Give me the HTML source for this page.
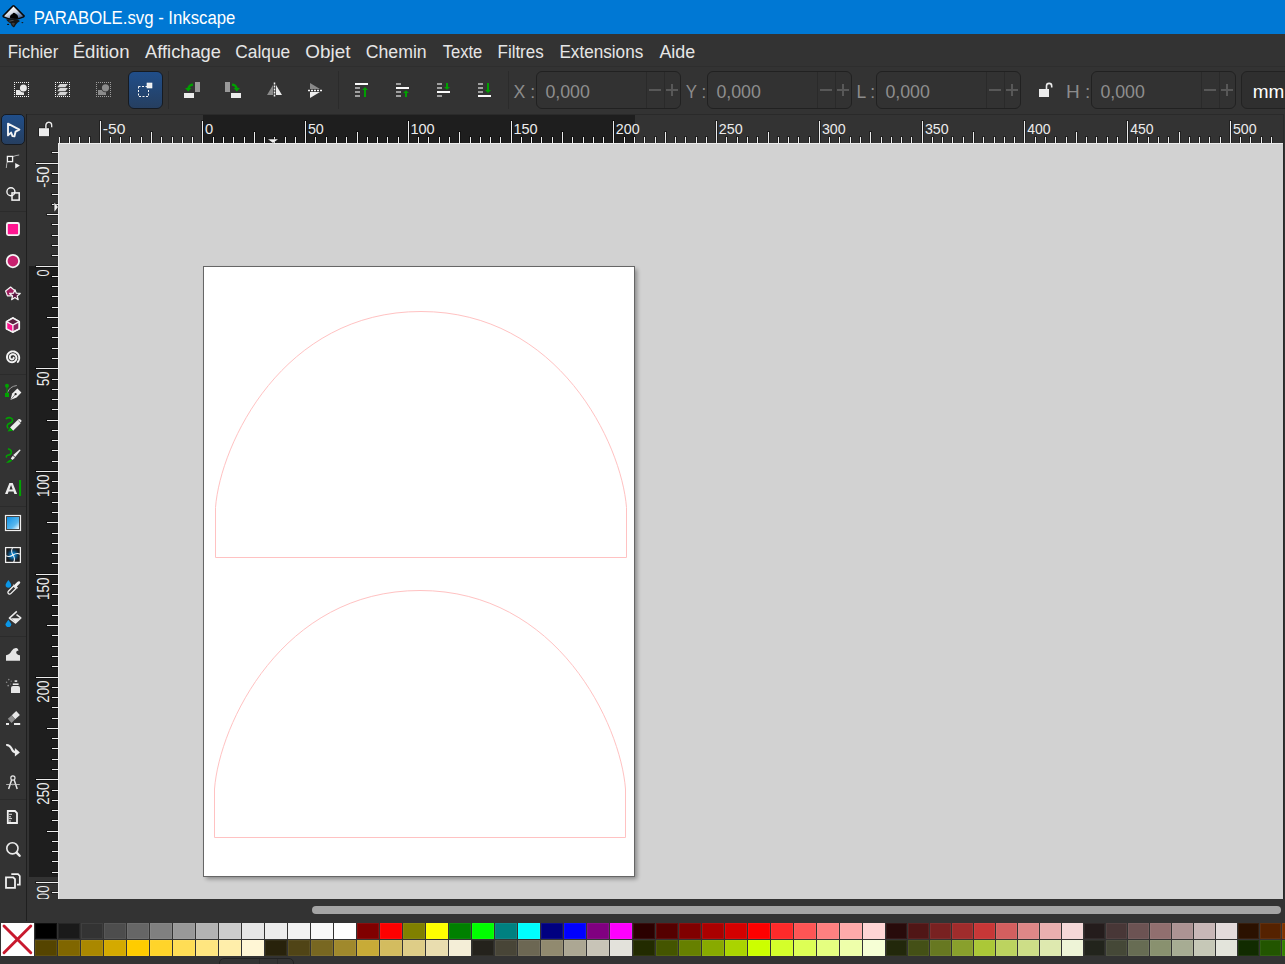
<!DOCTYPE html><html><head><meta charset="utf-8"><style>
*{margin:0;padding:0;box-sizing:border-box}
html,body{width:1285px;height:964px;overflow:hidden;background:#333333;font-family:"Liberation Sans", sans-serif}
.a{position:absolute}
.t{position:absolute;white-space:pre;line-height:1}
text{font-variant-ligatures:none;font-feature-settings:"liga" 0,"clig" 0}
</style></head><body>

<div class="a" style="left:0;top:0;width:1285px;height:34px;background:#0078d4"></div>
<div class="a" style="left:0;top:34px;width:1285px;height:32px;background:#333"></div>
<div class="a" style="left:0;top:66px;width:1285px;height:1px;background:#2e2e2e"></div>
<div class="a" style="left:128px;top:71px;width:35px;height:38px;border-radius:6px;background:linear-gradient(#204e8a,#263f60);border:1px solid #161b22"></div>
<div class="a" style="left:168px;top:71px;width:1px;height:38px;background:#2b2b2b"></div>
<div class="a" style="left:338px;top:71px;width:1px;height:38px;background:#2b2b2b"></div>
<div class="a" style="left:508px;top:71px;width:1px;height:38px;background:#2b2b2b"></div>
<div class="a" style="left:536.0px;top:71px;width:145.0px;height:38px;border-radius:6px;background:#323232;border:1px solid #212121"></div>
<div class="a" style="left:646.0px;top:72px;width:1px;height:36px;background:#2a2a2a"></div>
<div class="a" style="left:663.6px;top:72px;width:1px;height:36px;background:#2a2a2a"></div>
<div class="a" style="left:648.5px;top:88.7px;width:12px;height:2px;background:#585858"></div>
<div class="a" style="left:665.6px;top:88.7px;width:12px;height:2px;background:#585858"></div>
<div class="a" style="left:670.6px;top:83.7px;width:2px;height:12px;background:#585858"></div>
<div class="a" style="left:707.0px;top:71px;width:145.0px;height:38px;border-radius:6px;background:#323232;border:1px solid #212121"></div>
<div class="a" style="left:817.0px;top:72px;width:1px;height:36px;background:#2a2a2a"></div>
<div class="a" style="left:834.6px;top:72px;width:1px;height:36px;background:#2a2a2a"></div>
<div class="a" style="left:819.5px;top:88.7px;width:12px;height:2px;background:#585858"></div>
<div class="a" style="left:836.6px;top:88.7px;width:12px;height:2px;background:#585858"></div>
<div class="a" style="left:841.6px;top:83.7px;width:2px;height:12px;background:#585858"></div>
<div class="a" style="left:876.0px;top:71px;width:145.0px;height:38px;border-radius:6px;background:#323232;border:1px solid #212121"></div>
<div class="a" style="left:986.0px;top:72px;width:1px;height:36px;background:#2a2a2a"></div>
<div class="a" style="left:1003.6px;top:72px;width:1px;height:36px;background:#2a2a2a"></div>
<div class="a" style="left:988.5px;top:88.7px;width:12px;height:2px;background:#585858"></div>
<div class="a" style="left:1005.6px;top:88.7px;width:12px;height:2px;background:#585858"></div>
<div class="a" style="left:1010.6px;top:83.7px;width:2px;height:12px;background:#585858"></div>
<div class="a" style="left:1091.0px;top:71px;width:145.0px;height:38px;border-radius:6px;background:#323232;border:1px solid #212121"></div>
<div class="a" style="left:1201.0px;top:72px;width:1px;height:36px;background:#2a2a2a"></div>
<div class="a" style="left:1218.6px;top:72px;width:1px;height:36px;background:#2a2a2a"></div>
<div class="a" style="left:1203.5px;top:88.7px;width:12px;height:2px;background:#585858"></div>
<div class="a" style="left:1220.6px;top:88.7px;width:12px;height:2px;background:#585858"></div>
<div class="a" style="left:1225.6px;top:83.7px;width:2px;height:12px;background:#585858"></div>
<div class="a" style="left:1241px;top:71px;width:60px;height:38px;border-radius:6px;background:#2f2f2f;border:1px solid #222"></div>
<div class="a" style="left:1px;top:114px;width:24px;height:31px;border-radius:5px;background:linear-gradient(#204e8a,#263f60);border:1px solid #161b22"></div>
<div class="a" style="left:26px;top:114px;width:1px;height:807px;background:#1f1f1f"></div>
<div class="a" style="left:27px;top:114px;width:1258px;height:30px;background:#333"></div>
<div class="a" style="left:203px;top:114px;width:432px;height:29px;background:#1e1e1e"></div>
<div class="a" style="left:29px;top:144px;width:30px;height:755px;background:#333"></div>
<div class="a" style="left:29px;top:266px;width:29px;height:611px;background:#1e1e1e"></div>
<div class="a" style="left:59px;top:144px;width:1224px;height:755px;background:#d2d2d2"></div>
<svg class="a" style="left:0;top:0" width="1285" height="964" font-family="Liberation Sans">
<defs><clipPath id="lr"><rect x="0" y="144" width="59" height="755"/></clipPath><clipPath id="tr"><rect x="59" y="114" width="1224" height="30"/></clipPath></defs>
<rect x="27" y="114" width="1256" height="1" fill="#2a2a2a"/>
<rect x="1283" y="114" width="1" height="785" fill="#2a2a2a"/>
<rect x="59" y="143" width="1224" height="1" fill="#ececec"/>
<rect x="58" y="143" width="1" height="756" fill="#ececec"/>
<g clip-path="url(#tr)">
<rect x="37" y="136" width="3" height="7" fill="#000" opacity="0.35"/>
<rect x="38" y="137" width="1" height="6" fill="#ececec"/>
<rect x="47" y="131" width="3" height="12" fill="#000" opacity="0.35"/>
<rect x="48" y="132" width="1" height="11" fill="#ececec"/>
<rect x="58" y="136" width="3" height="7" fill="#000" opacity="0.35"/>
<rect x="59" y="137" width="1" height="6" fill="#ececec"/>
<rect x="68" y="136" width="3" height="7" fill="#000" opacity="0.35"/>
<rect x="69" y="137" width="1" height="6" fill="#ececec"/>
<rect x="78" y="136" width="3" height="7" fill="#000" opacity="0.35"/>
<rect x="79" y="137" width="1" height="6" fill="#ececec"/>
<rect x="88" y="136" width="3" height="7" fill="#000" opacity="0.35"/>
<rect x="89" y="137" width="1" height="6" fill="#ececec"/>
<rect x="99" y="120" width="3" height="23" fill="#000" opacity="0.35"/>
<rect x="100" y="121" width="1" height="22" fill="#ececec"/>
<text x="102.80" y="134.00" font-size="15.20" fill="#ececec" textLength="22.55" lengthAdjust="spacingAndGlyphs">-50</text>
<rect x="109" y="136" width="3" height="7" fill="#000" opacity="0.35"/>
<rect x="110" y="137" width="1" height="6" fill="#ececec"/>
<rect x="119" y="136" width="3" height="7" fill="#000" opacity="0.35"/>
<rect x="120" y="137" width="1" height="6" fill="#ececec"/>
<rect x="129" y="136" width="3" height="7" fill="#000" opacity="0.35"/>
<rect x="130" y="137" width="1" height="6" fill="#ececec"/>
<rect x="140" y="136" width="3" height="7" fill="#000" opacity="0.35"/>
<rect x="141" y="137" width="1" height="6" fill="#ececec"/>
<rect x="150" y="131" width="3" height="12" fill="#000" opacity="0.35"/>
<rect x="151" y="132" width="1" height="11" fill="#ececec"/>
<rect x="160" y="136" width="3" height="7" fill="#000" opacity="0.35"/>
<rect x="161" y="137" width="1" height="6" fill="#ececec"/>
<rect x="171" y="136" width="3" height="7" fill="#000" opacity="0.35"/>
<rect x="172" y="137" width="1" height="6" fill="#ececec"/>
<rect x="181" y="136" width="3" height="7" fill="#000" opacity="0.35"/>
<rect x="182" y="137" width="1" height="6" fill="#ececec"/>
<rect x="191" y="136" width="3" height="7" fill="#000" opacity="0.35"/>
<rect x="192" y="137" width="1" height="6" fill="#ececec"/>
<rect x="201" y="120" width="3" height="23" fill="#000" opacity="0.35"/>
<rect x="202" y="121" width="1" height="22" fill="#ececec"/>
<text x="204.91" y="134.00" font-size="15.20" fill="#ececec" textLength="8.17" lengthAdjust="spacingAndGlyphs">0</text>
<rect x="212" y="136" width="3" height="7" fill="#000" opacity="0.35"/>
<rect x="213" y="137" width="1" height="6" fill="#ececec"/>
<rect x="222" y="136" width="3" height="7" fill="#000" opacity="0.35"/>
<rect x="223" y="137" width="1" height="6" fill="#ececec"/>
<rect x="232" y="136" width="3" height="7" fill="#000" opacity="0.35"/>
<rect x="233" y="137" width="1" height="6" fill="#ececec"/>
<rect x="243" y="136" width="3" height="7" fill="#000" opacity="0.35"/>
<rect x="244" y="137" width="1" height="6" fill="#ececec"/>
<rect x="253" y="131" width="3" height="12" fill="#000" opacity="0.35"/>
<rect x="254" y="132" width="1" height="11" fill="#ececec"/>
<rect x="263" y="136" width="3" height="7" fill="#000" opacity="0.35"/>
<rect x="264" y="137" width="1" height="6" fill="#ececec"/>
<rect x="273" y="136" width="3" height="7" fill="#000" opacity="0.35"/>
<rect x="274" y="137" width="1" height="6" fill="#ececec"/>
<rect x="284" y="136" width="3" height="7" fill="#000" opacity="0.35"/>
<rect x="285" y="137" width="1" height="6" fill="#ececec"/>
<rect x="294" y="136" width="3" height="7" fill="#000" opacity="0.35"/>
<rect x="295" y="137" width="1" height="6" fill="#ececec"/>
<rect x="304" y="120" width="3" height="23" fill="#000" opacity="0.35"/>
<rect x="305" y="121" width="1" height="22" fill="#ececec"/>
<text x="307.93" y="134.00" font-size="15.20" fill="#ececec" textLength="15.91" lengthAdjust="spacingAndGlyphs">50</text>
<rect x="314" y="136" width="3" height="7" fill="#000" opacity="0.35"/>
<rect x="315" y="137" width="1" height="6" fill="#ececec"/>
<rect x="325" y="136" width="3" height="7" fill="#000" opacity="0.35"/>
<rect x="326" y="137" width="1" height="6" fill="#ececec"/>
<rect x="335" y="136" width="3" height="7" fill="#000" opacity="0.35"/>
<rect x="336" y="137" width="1" height="6" fill="#ececec"/>
<rect x="345" y="136" width="3" height="7" fill="#000" opacity="0.35"/>
<rect x="346" y="137" width="1" height="6" fill="#ececec"/>
<rect x="356" y="131" width="3" height="12" fill="#000" opacity="0.35"/>
<rect x="357" y="132" width="1" height="11" fill="#ececec"/>
<rect x="366" y="136" width="3" height="7" fill="#000" opacity="0.35"/>
<rect x="367" y="137" width="1" height="6" fill="#ececec"/>
<rect x="376" y="136" width="3" height="7" fill="#000" opacity="0.35"/>
<rect x="377" y="137" width="1" height="6" fill="#ececec"/>
<rect x="386" y="136" width="3" height="7" fill="#000" opacity="0.35"/>
<rect x="387" y="137" width="1" height="6" fill="#ececec"/>
<rect x="397" y="136" width="3" height="7" fill="#000" opacity="0.35"/>
<rect x="398" y="137" width="1" height="6" fill="#ececec"/>
<rect x="407" y="120" width="3" height="23" fill="#000" opacity="0.35"/>
<rect x="408" y="121" width="1" height="22" fill="#ececec"/>
<text x="410.41" y="134.00" font-size="15.20" fill="#ececec" textLength="24.20" lengthAdjust="spacingAndGlyphs">100</text>
<rect x="417" y="136" width="3" height="7" fill="#000" opacity="0.35"/>
<rect x="418" y="137" width="1" height="6" fill="#ececec"/>
<rect x="427" y="136" width="3" height="7" fill="#000" opacity="0.35"/>
<rect x="428" y="137" width="1" height="6" fill="#ececec"/>
<rect x="438" y="136" width="3" height="7" fill="#000" opacity="0.35"/>
<rect x="439" y="137" width="1" height="6" fill="#ececec"/>
<rect x="448" y="136" width="3" height="7" fill="#000" opacity="0.35"/>
<rect x="449" y="137" width="1" height="6" fill="#ececec"/>
<rect x="458" y="131" width="3" height="12" fill="#000" opacity="0.35"/>
<rect x="459" y="132" width="1" height="11" fill="#ececec"/>
<rect x="469" y="136" width="3" height="7" fill="#000" opacity="0.35"/>
<rect x="470" y="137" width="1" height="6" fill="#ececec"/>
<rect x="479" y="136" width="3" height="7" fill="#000" opacity="0.35"/>
<rect x="480" y="137" width="1" height="6" fill="#ececec"/>
<rect x="489" y="136" width="3" height="7" fill="#000" opacity="0.35"/>
<rect x="490" y="137" width="1" height="6" fill="#ececec"/>
<rect x="499" y="136" width="3" height="7" fill="#000" opacity="0.35"/>
<rect x="500" y="137" width="1" height="6" fill="#ececec"/>
<rect x="510" y="120" width="3" height="23" fill="#000" opacity="0.35"/>
<rect x="511" y="121" width="1" height="22" fill="#ececec"/>
<text x="513.41" y="134.00" font-size="15.20" fill="#ececec" textLength="24.20" lengthAdjust="spacingAndGlyphs">150</text>
<rect x="520" y="136" width="3" height="7" fill="#000" opacity="0.35"/>
<rect x="521" y="137" width="1" height="6" fill="#ececec"/>
<rect x="530" y="136" width="3" height="7" fill="#000" opacity="0.35"/>
<rect x="531" y="137" width="1" height="6" fill="#ececec"/>
<rect x="540" y="136" width="3" height="7" fill="#000" opacity="0.35"/>
<rect x="541" y="137" width="1" height="6" fill="#ececec"/>
<rect x="551" y="136" width="3" height="7" fill="#000" opacity="0.35"/>
<rect x="552" y="137" width="1" height="6" fill="#ececec"/>
<rect x="561" y="131" width="3" height="12" fill="#000" opacity="0.35"/>
<rect x="562" y="132" width="1" height="11" fill="#ececec"/>
<rect x="571" y="136" width="3" height="7" fill="#000" opacity="0.35"/>
<rect x="572" y="137" width="1" height="6" fill="#ececec"/>
<rect x="582" y="136" width="3" height="7" fill="#000" opacity="0.35"/>
<rect x="583" y="137" width="1" height="6" fill="#ececec"/>
<rect x="592" y="136" width="3" height="7" fill="#000" opacity="0.35"/>
<rect x="593" y="137" width="1" height="6" fill="#ececec"/>
<rect x="602" y="136" width="3" height="7" fill="#000" opacity="0.35"/>
<rect x="603" y="137" width="1" height="6" fill="#ececec"/>
<rect x="612" y="120" width="3" height="23" fill="#000" opacity="0.35"/>
<rect x="613" y="121" width="1" height="22" fill="#ececec"/>
<text x="615.79" y="134.00" font-size="15.20" fill="#ececec" textLength="23.81" lengthAdjust="spacingAndGlyphs">200</text>
<rect x="623" y="136" width="3" height="7" fill="#000" opacity="0.35"/>
<rect x="624" y="137" width="1" height="6" fill="#ececec"/>
<rect x="633" y="136" width="3" height="7" fill="#000" opacity="0.35"/>
<rect x="634" y="137" width="1" height="6" fill="#ececec"/>
<rect x="643" y="136" width="3" height="7" fill="#000" opacity="0.35"/>
<rect x="644" y="137" width="1" height="6" fill="#ececec"/>
<rect x="654" y="136" width="3" height="7" fill="#000" opacity="0.35"/>
<rect x="655" y="137" width="1" height="6" fill="#ececec"/>
<rect x="664" y="131" width="3" height="12" fill="#000" opacity="0.35"/>
<rect x="665" y="132" width="1" height="11" fill="#ececec"/>
<rect x="674" y="136" width="3" height="7" fill="#000" opacity="0.35"/>
<rect x="675" y="137" width="1" height="6" fill="#ececec"/>
<rect x="684" y="136" width="3" height="7" fill="#000" opacity="0.35"/>
<rect x="685" y="137" width="1" height="6" fill="#ececec"/>
<rect x="695" y="136" width="3" height="7" fill="#000" opacity="0.35"/>
<rect x="696" y="137" width="1" height="6" fill="#ececec"/>
<rect x="705" y="136" width="3" height="7" fill="#000" opacity="0.35"/>
<rect x="706" y="137" width="1" height="6" fill="#ececec"/>
<rect x="715" y="120" width="3" height="23" fill="#000" opacity="0.35"/>
<rect x="716" y="121" width="1" height="22" fill="#ececec"/>
<text x="718.79" y="134.00" font-size="15.20" fill="#ececec" textLength="23.81" lengthAdjust="spacingAndGlyphs">250</text>
<rect x="725" y="136" width="3" height="7" fill="#000" opacity="0.35"/>
<rect x="726" y="137" width="1" height="6" fill="#ececec"/>
<rect x="736" y="136" width="3" height="7" fill="#000" opacity="0.35"/>
<rect x="737" y="137" width="1" height="6" fill="#ececec"/>
<rect x="746" y="136" width="3" height="7" fill="#000" opacity="0.35"/>
<rect x="747" y="137" width="1" height="6" fill="#ececec"/>
<rect x="756" y="136" width="3" height="7" fill="#000" opacity="0.35"/>
<rect x="757" y="137" width="1" height="6" fill="#ececec"/>
<rect x="767" y="131" width="3" height="12" fill="#000" opacity="0.35"/>
<rect x="768" y="132" width="1" height="11" fill="#ececec"/>
<rect x="777" y="136" width="3" height="7" fill="#000" opacity="0.35"/>
<rect x="778" y="137" width="1" height="6" fill="#ececec"/>
<rect x="787" y="136" width="3" height="7" fill="#000" opacity="0.35"/>
<rect x="788" y="137" width="1" height="6" fill="#ececec"/>
<rect x="797" y="136" width="3" height="7" fill="#000" opacity="0.35"/>
<rect x="798" y="137" width="1" height="6" fill="#ececec"/>
<rect x="808" y="136" width="3" height="7" fill="#000" opacity="0.35"/>
<rect x="809" y="137" width="1" height="6" fill="#ececec"/>
<rect x="818" y="120" width="3" height="23" fill="#000" opacity="0.35"/>
<rect x="819" y="121" width="1" height="22" fill="#ececec"/>
<text x="821.93" y="134.00" font-size="15.20" fill="#ececec" textLength="23.66" lengthAdjust="spacingAndGlyphs">300</text>
<rect x="828" y="136" width="3" height="7" fill="#000" opacity="0.35"/>
<rect x="829" y="137" width="1" height="6" fill="#ececec"/>
<rect x="838" y="136" width="3" height="7" fill="#000" opacity="0.35"/>
<rect x="839" y="137" width="1" height="6" fill="#ececec"/>
<rect x="849" y="136" width="3" height="7" fill="#000" opacity="0.35"/>
<rect x="850" y="137" width="1" height="6" fill="#ececec"/>
<rect x="859" y="136" width="3" height="7" fill="#000" opacity="0.35"/>
<rect x="860" y="137" width="1" height="6" fill="#ececec"/>
<rect x="869" y="131" width="3" height="12" fill="#000" opacity="0.35"/>
<rect x="870" y="132" width="1" height="11" fill="#ececec"/>
<rect x="880" y="136" width="3" height="7" fill="#000" opacity="0.35"/>
<rect x="881" y="137" width="1" height="6" fill="#ececec"/>
<rect x="890" y="136" width="3" height="7" fill="#000" opacity="0.35"/>
<rect x="891" y="137" width="1" height="6" fill="#ececec"/>
<rect x="900" y="136" width="3" height="7" fill="#000" opacity="0.35"/>
<rect x="901" y="137" width="1" height="6" fill="#ececec"/>
<rect x="910" y="136" width="3" height="7" fill="#000" opacity="0.35"/>
<rect x="911" y="137" width="1" height="6" fill="#ececec"/>
<rect x="921" y="120" width="3" height="23" fill="#000" opacity="0.35"/>
<rect x="922" y="121" width="1" height="22" fill="#ececec"/>
<text x="924.93" y="134.00" font-size="15.20" fill="#ececec" textLength="23.66" lengthAdjust="spacingAndGlyphs">350</text>
<rect x="931" y="136" width="3" height="7" fill="#000" opacity="0.35"/>
<rect x="932" y="137" width="1" height="6" fill="#ececec"/>
<rect x="941" y="136" width="3" height="7" fill="#000" opacity="0.35"/>
<rect x="942" y="137" width="1" height="6" fill="#ececec"/>
<rect x="951" y="136" width="3" height="7" fill="#000" opacity="0.35"/>
<rect x="952" y="137" width="1" height="6" fill="#ececec"/>
<rect x="962" y="136" width="3" height="7" fill="#000" opacity="0.35"/>
<rect x="963" y="137" width="1" height="6" fill="#ececec"/>
<rect x="972" y="131" width="3" height="12" fill="#000" opacity="0.35"/>
<rect x="973" y="132" width="1" height="11" fill="#ececec"/>
<rect x="982" y="136" width="3" height="7" fill="#000" opacity="0.35"/>
<rect x="983" y="137" width="1" height="6" fill="#ececec"/>
<rect x="993" y="136" width="3" height="7" fill="#000" opacity="0.35"/>
<rect x="994" y="137" width="1" height="6" fill="#ececec"/>
<rect x="1003" y="136" width="3" height="7" fill="#000" opacity="0.35"/>
<rect x="1004" y="137" width="1" height="6" fill="#ececec"/>
<rect x="1013" y="136" width="3" height="7" fill="#000" opacity="0.35"/>
<rect x="1014" y="137" width="1" height="6" fill="#ececec"/>
<rect x="1023" y="120" width="3" height="23" fill="#000" opacity="0.35"/>
<rect x="1024" y="121" width="1" height="22" fill="#ececec"/>
<text x="1027.22" y="134.00" font-size="15.20" fill="#ececec" textLength="23.37" lengthAdjust="spacingAndGlyphs">400</text>
<rect x="1034" y="136" width="3" height="7" fill="#000" opacity="0.35"/>
<rect x="1035" y="137" width="1" height="6" fill="#ececec"/>
<rect x="1044" y="136" width="3" height="7" fill="#000" opacity="0.35"/>
<rect x="1045" y="137" width="1" height="6" fill="#ececec"/>
<rect x="1054" y="136" width="3" height="7" fill="#000" opacity="0.35"/>
<rect x="1055" y="137" width="1" height="6" fill="#ececec"/>
<rect x="1065" y="136" width="3" height="7" fill="#000" opacity="0.35"/>
<rect x="1066" y="137" width="1" height="6" fill="#ececec"/>
<rect x="1075" y="131" width="3" height="12" fill="#000" opacity="0.35"/>
<rect x="1076" y="132" width="1" height="11" fill="#ececec"/>
<rect x="1085" y="136" width="3" height="7" fill="#000" opacity="0.35"/>
<rect x="1086" y="137" width="1" height="6" fill="#ececec"/>
<rect x="1095" y="136" width="3" height="7" fill="#000" opacity="0.35"/>
<rect x="1096" y="137" width="1" height="6" fill="#ececec"/>
<rect x="1106" y="136" width="3" height="7" fill="#000" opacity="0.35"/>
<rect x="1107" y="137" width="1" height="6" fill="#ececec"/>
<rect x="1116" y="136" width="3" height="7" fill="#000" opacity="0.35"/>
<rect x="1117" y="137" width="1" height="6" fill="#ececec"/>
<rect x="1126" y="120" width="3" height="23" fill="#000" opacity="0.35"/>
<rect x="1127" y="121" width="1" height="22" fill="#ececec"/>
<text x="1130.22" y="134.00" font-size="15.20" fill="#ececec" textLength="23.37" lengthAdjust="spacingAndGlyphs">450</text>
<rect x="1136" y="136" width="3" height="7" fill="#000" opacity="0.35"/>
<rect x="1137" y="137" width="1" height="6" fill="#ececec"/>
<rect x="1147" y="136" width="3" height="7" fill="#000" opacity="0.35"/>
<rect x="1148" y="137" width="1" height="6" fill="#ececec"/>
<rect x="1157" y="136" width="3" height="7" fill="#000" opacity="0.35"/>
<rect x="1158" y="137" width="1" height="6" fill="#ececec"/>
<rect x="1167" y="136" width="3" height="7" fill="#000" opacity="0.35"/>
<rect x="1168" y="137" width="1" height="6" fill="#ececec"/>
<rect x="1178" y="131" width="3" height="12" fill="#000" opacity="0.35"/>
<rect x="1179" y="132" width="1" height="11" fill="#ececec"/>
<rect x="1188" y="136" width="3" height="7" fill="#000" opacity="0.35"/>
<rect x="1189" y="137" width="1" height="6" fill="#ececec"/>
<rect x="1198" y="136" width="3" height="7" fill="#000" opacity="0.35"/>
<rect x="1199" y="137" width="1" height="6" fill="#ececec"/>
<rect x="1208" y="136" width="3" height="7" fill="#000" opacity="0.35"/>
<rect x="1209" y="137" width="1" height="6" fill="#ececec"/>
<rect x="1219" y="136" width="3" height="7" fill="#000" opacity="0.35"/>
<rect x="1220" y="137" width="1" height="6" fill="#ececec"/>
<rect x="1229" y="120" width="3" height="23" fill="#000" opacity="0.35"/>
<rect x="1230" y="121" width="1" height="22" fill="#ececec"/>
<text x="1232.93" y="134.00" font-size="15.20" fill="#ececec" textLength="23.66" lengthAdjust="spacingAndGlyphs">500</text>
<rect x="1239" y="136" width="3" height="7" fill="#000" opacity="0.35"/>
<rect x="1240" y="137" width="1" height="6" fill="#ececec"/>
<rect x="1249" y="136" width="3" height="7" fill="#000" opacity="0.35"/>
<rect x="1250" y="137" width="1" height="6" fill="#ececec"/>
<rect x="1260" y="136" width="3" height="7" fill="#000" opacity="0.35"/>
<rect x="1261" y="137" width="1" height="6" fill="#ececec"/>
<rect x="1270" y="136" width="3" height="7" fill="#000" opacity="0.35"/>
<rect x="1271" y="137" width="1" height="6" fill="#ececec"/>
<path d="M267.4,138.8 L278.6,138.8 L273,143.6 Z" fill="#000" opacity="0.5"/>
<path d="M268,139.3 L278,139.3 L273,143 Z" fill="#f0f0f0"/>
</g><g clip-path="url(#lr)">
<rect x="51" y="141" width="7" height="3" fill="#000" opacity="0.35"/>
<rect x="52" y="142" width="6" height="1" fill="#ececec"/>
<rect x="51" y="151" width="7" height="3" fill="#000" opacity="0.35"/>
<rect x="52" y="152" width="6" height="1" fill="#ececec"/>
<rect x="35" y="162" width="23" height="3" fill="#000" opacity="0.35"/>
<rect x="36" y="163" width="22" height="1" fill="#ececec"/>
<text transform="translate(49.30,187.20) rotate(-90)" x="-0.67" y="0" font-size="15.70" fill="#ececec" textLength="21.39" lengthAdjust="spacingAndGlyphs">-50</text>
<rect x="51" y="172" width="7" height="3" fill="#000" opacity="0.35"/>
<rect x="52" y="173" width="6" height="1" fill="#ececec"/>
<rect x="51" y="182" width="7" height="3" fill="#000" opacity="0.35"/>
<rect x="52" y="183" width="6" height="1" fill="#ececec"/>
<rect x="51" y="193" width="7" height="3" fill="#000" opacity="0.35"/>
<rect x="52" y="194" width="6" height="1" fill="#ececec"/>
<rect x="51" y="203" width="7" height="3" fill="#000" opacity="0.35"/>
<rect x="52" y="204" width="6" height="1" fill="#ececec"/>
<rect x="46" y="213" width="12" height="3" fill="#000" opacity="0.35"/>
<rect x="47" y="214" width="11" height="1" fill="#ececec"/>
<rect x="51" y="223" width="7" height="3" fill="#000" opacity="0.35"/>
<rect x="52" y="224" width="6" height="1" fill="#ececec"/>
<rect x="51" y="234" width="7" height="3" fill="#000" opacity="0.35"/>
<rect x="52" y="235" width="6" height="1" fill="#ececec"/>
<rect x="51" y="244" width="7" height="3" fill="#000" opacity="0.35"/>
<rect x="52" y="245" width="6" height="1" fill="#ececec"/>
<rect x="51" y="254" width="7" height="3" fill="#000" opacity="0.35"/>
<rect x="52" y="255" width="6" height="1" fill="#ececec"/>
<rect x="35" y="265" width="23" height="3" fill="#000" opacity="0.35"/>
<rect x="36" y="266" width="22" height="1" fill="#ececec"/>
<text transform="translate(49.30,276.10) rotate(-90)" x="-0.51" y="0" font-size="15.70" fill="#ececec" textLength="7.07" lengthAdjust="spacingAndGlyphs">0</text>
<rect x="51" y="275" width="7" height="3" fill="#000" opacity="0.35"/>
<rect x="52" y="276" width="6" height="1" fill="#ececec"/>
<rect x="51" y="285" width="7" height="3" fill="#000" opacity="0.35"/>
<rect x="52" y="286" width="6" height="1" fill="#ececec"/>
<rect x="51" y="295" width="7" height="3" fill="#000" opacity="0.35"/>
<rect x="52" y="296" width="6" height="1" fill="#ececec"/>
<rect x="51" y="306" width="7" height="3" fill="#000" opacity="0.35"/>
<rect x="52" y="307" width="6" height="1" fill="#ececec"/>
<rect x="46" y="316" width="12" height="3" fill="#000" opacity="0.35"/>
<rect x="47" y="317" width="11" height="1" fill="#ececec"/>
<rect x="51" y="326" width="7" height="3" fill="#000" opacity="0.35"/>
<rect x="52" y="327" width="6" height="1" fill="#ececec"/>
<rect x="51" y="336" width="7" height="3" fill="#000" opacity="0.35"/>
<rect x="52" y="337" width="6" height="1" fill="#ececec"/>
<rect x="51" y="347" width="7" height="3" fill="#000" opacity="0.35"/>
<rect x="52" y="348" width="6" height="1" fill="#ececec"/>
<rect x="51" y="357" width="7" height="3" fill="#000" opacity="0.35"/>
<rect x="52" y="358" width="6" height="1" fill="#ececec"/>
<rect x="35" y="367" width="23" height="3" fill="#000" opacity="0.35"/>
<rect x="36" y="368" width="22" height="1" fill="#ececec"/>
<text transform="translate(49.30,385.60) rotate(-90)" x="-0.53" y="0" font-size="15.70" fill="#ececec" textLength="14.62" lengthAdjust="spacingAndGlyphs">50</text>
<rect x="51" y="378" width="7" height="3" fill="#000" opacity="0.35"/>
<rect x="52" y="379" width="6" height="1" fill="#ececec"/>
<rect x="51" y="388" width="7" height="3" fill="#000" opacity="0.35"/>
<rect x="52" y="389" width="6" height="1" fill="#ececec"/>
<rect x="51" y="398" width="7" height="3" fill="#000" opacity="0.35"/>
<rect x="52" y="399" width="6" height="1" fill="#ececec"/>
<rect x="51" y="408" width="7" height="3" fill="#000" opacity="0.35"/>
<rect x="52" y="409" width="6" height="1" fill="#ececec"/>
<rect x="46" y="419" width="12" height="3" fill="#000" opacity="0.35"/>
<rect x="47" y="420" width="11" height="1" fill="#ececec"/>
<rect x="51" y="429" width="7" height="3" fill="#000" opacity="0.35"/>
<rect x="52" y="430" width="6" height="1" fill="#ececec"/>
<rect x="51" y="439" width="7" height="3" fill="#000" opacity="0.35"/>
<rect x="52" y="440" width="6" height="1" fill="#ececec"/>
<rect x="51" y="449" width="7" height="3" fill="#000" opacity="0.35"/>
<rect x="52" y="450" width="6" height="1" fill="#ececec"/>
<rect x="51" y="460" width="7" height="3" fill="#000" opacity="0.35"/>
<rect x="52" y="461" width="6" height="1" fill="#ececec"/>
<rect x="35" y="470" width="23" height="3" fill="#000" opacity="0.35"/>
<rect x="36" y="471" width="22" height="1" fill="#ececec"/>
<text transform="translate(49.30,496.10) rotate(-90)" x="-1.02" y="0" font-size="15.70" fill="#ececec" textLength="22.64" lengthAdjust="spacingAndGlyphs">100</text>
<rect x="51" y="480" width="7" height="3" fill="#000" opacity="0.35"/>
<rect x="52" y="481" width="6" height="1" fill="#ececec"/>
<rect x="51" y="491" width="7" height="3" fill="#000" opacity="0.35"/>
<rect x="52" y="492" width="6" height="1" fill="#ececec"/>
<rect x="51" y="501" width="7" height="3" fill="#000" opacity="0.35"/>
<rect x="52" y="502" width="6" height="1" fill="#ececec"/>
<rect x="51" y="511" width="7" height="3" fill="#000" opacity="0.35"/>
<rect x="52" y="512" width="6" height="1" fill="#ececec"/>
<rect x="46" y="521" width="12" height="3" fill="#000" opacity="0.35"/>
<rect x="47" y="522" width="11" height="1" fill="#ececec"/>
<rect x="51" y="532" width="7" height="3" fill="#000" opacity="0.35"/>
<rect x="52" y="533" width="6" height="1" fill="#ececec"/>
<rect x="51" y="542" width="7" height="3" fill="#000" opacity="0.35"/>
<rect x="52" y="543" width="6" height="1" fill="#ececec"/>
<rect x="51" y="552" width="7" height="3" fill="#000" opacity="0.35"/>
<rect x="52" y="553" width="6" height="1" fill="#ececec"/>
<rect x="51" y="562" width="7" height="3" fill="#000" opacity="0.35"/>
<rect x="52" y="563" width="6" height="1" fill="#ececec"/>
<rect x="35" y="573" width="23" height="3" fill="#000" opacity="0.35"/>
<rect x="36" y="574" width="22" height="1" fill="#ececec"/>
<text transform="translate(49.30,599.10) rotate(-90)" x="-1.02" y="0" font-size="15.70" fill="#ececec" textLength="22.64" lengthAdjust="spacingAndGlyphs">150</text>
<rect x="51" y="583" width="7" height="3" fill="#000" opacity="0.35"/>
<rect x="52" y="584" width="6" height="1" fill="#ececec"/>
<rect x="51" y="593" width="7" height="3" fill="#000" opacity="0.35"/>
<rect x="52" y="594" width="6" height="1" fill="#ececec"/>
<rect x="51" y="604" width="7" height="3" fill="#000" opacity="0.35"/>
<rect x="52" y="605" width="6" height="1" fill="#ececec"/>
<rect x="51" y="614" width="7" height="3" fill="#000" opacity="0.35"/>
<rect x="52" y="615" width="6" height="1" fill="#ececec"/>
<rect x="46" y="624" width="12" height="3" fill="#000" opacity="0.35"/>
<rect x="47" y="625" width="11" height="1" fill="#ececec"/>
<rect x="51" y="634" width="7" height="3" fill="#000" opacity="0.35"/>
<rect x="52" y="635" width="6" height="1" fill="#ececec"/>
<rect x="51" y="645" width="7" height="3" fill="#000" opacity="0.35"/>
<rect x="52" y="646" width="6" height="1" fill="#ececec"/>
<rect x="51" y="655" width="7" height="3" fill="#000" opacity="0.35"/>
<rect x="52" y="656" width="6" height="1" fill="#ececec"/>
<rect x="51" y="665" width="7" height="3" fill="#000" opacity="0.35"/>
<rect x="52" y="666" width="6" height="1" fill="#ececec"/>
<rect x="35" y="676" width="23" height="3" fill="#000" opacity="0.35"/>
<rect x="36" y="677" width="22" height="1" fill="#ececec"/>
<text transform="translate(49.30,702.10) rotate(-90)" x="-0.67" y="0" font-size="15.70" fill="#ececec" textLength="22.28" lengthAdjust="spacingAndGlyphs">200</text>
<rect x="51" y="686" width="7" height="3" fill="#000" opacity="0.35"/>
<rect x="52" y="687" width="6" height="1" fill="#ececec"/>
<rect x="51" y="696" width="7" height="3" fill="#000" opacity="0.35"/>
<rect x="52" y="697" width="6" height="1" fill="#ececec"/>
<rect x="51" y="706" width="7" height="3" fill="#000" opacity="0.35"/>
<rect x="52" y="707" width="6" height="1" fill="#ececec"/>
<rect x="51" y="717" width="7" height="3" fill="#000" opacity="0.35"/>
<rect x="52" y="718" width="6" height="1" fill="#ececec"/>
<rect x="46" y="727" width="12" height="3" fill="#000" opacity="0.35"/>
<rect x="47" y="728" width="11" height="1" fill="#ececec"/>
<rect x="51" y="737" width="7" height="3" fill="#000" opacity="0.35"/>
<rect x="52" y="738" width="6" height="1" fill="#ececec"/>
<rect x="51" y="747" width="7" height="3" fill="#000" opacity="0.35"/>
<rect x="52" y="748" width="6" height="1" fill="#ececec"/>
<rect x="51" y="758" width="7" height="3" fill="#000" opacity="0.35"/>
<rect x="52" y="759" width="6" height="1" fill="#ececec"/>
<rect x="51" y="768" width="7" height="3" fill="#000" opacity="0.35"/>
<rect x="52" y="769" width="6" height="1" fill="#ececec"/>
<rect x="35" y="778" width="23" height="3" fill="#000" opacity="0.35"/>
<rect x="36" y="779" width="22" height="1" fill="#ececec"/>
<text transform="translate(49.30,804.10) rotate(-90)" x="-0.67" y="0" font-size="15.70" fill="#ececec" textLength="22.28" lengthAdjust="spacingAndGlyphs">250</text>
<rect x="51" y="789" width="7" height="3" fill="#000" opacity="0.35"/>
<rect x="52" y="790" width="6" height="1" fill="#ececec"/>
<rect x="51" y="799" width="7" height="3" fill="#000" opacity="0.35"/>
<rect x="52" y="800" width="6" height="1" fill="#ececec"/>
<rect x="51" y="809" width="7" height="3" fill="#000" opacity="0.35"/>
<rect x="52" y="810" width="6" height="1" fill="#ececec"/>
<rect x="51" y="819" width="7" height="3" fill="#000" opacity="0.35"/>
<rect x="52" y="820" width="6" height="1" fill="#ececec"/>
<rect x="46" y="830" width="12" height="3" fill="#000" opacity="0.35"/>
<rect x="47" y="831" width="11" height="1" fill="#ececec"/>
<rect x="51" y="840" width="7" height="3" fill="#000" opacity="0.35"/>
<rect x="52" y="841" width="6" height="1" fill="#ececec"/>
<rect x="51" y="850" width="7" height="3" fill="#000" opacity="0.35"/>
<rect x="52" y="851" width="6" height="1" fill="#ececec"/>
<rect x="51" y="860" width="7" height="3" fill="#000" opacity="0.35"/>
<rect x="52" y="861" width="6" height="1" fill="#ececec"/>
<rect x="51" y="871" width="7" height="3" fill="#000" opacity="0.35"/>
<rect x="52" y="872" width="6" height="1" fill="#ececec"/>
<rect x="35" y="881" width="23" height="3" fill="#000" opacity="0.35"/>
<rect x="36" y="882" width="22" height="1" fill="#ececec"/>
<text transform="translate(49.30,907.10) rotate(-90)" x="-0.53" y="0" font-size="15.70" fill="#ececec" textLength="22.14" lengthAdjust="spacingAndGlyphs">300</text>
<rect x="51" y="891" width="7" height="3" fill="#000" opacity="0.35"/>
<rect x="52" y="892" width="6" height="1" fill="#ececec"/>
<rect x="51" y="902" width="7" height="3" fill="#000" opacity="0.35"/>
<rect x="52" y="903" width="6" height="1" fill="#ececec"/>
<rect x="51" y="912" width="7" height="3" fill="#000" opacity="0.35"/>
<rect x="52" y="913" width="6" height="1" fill="#ececec"/>
<path d="M53.8,201.6 L53.8,212.4 L58.5,207 Z" fill="#000" opacity="0.5"/>
<path d="M54.4,202.5 L54.4,211.8 L58,207 Z" fill="#f0f0f0"/>
</g>
<rect x="38.4" y="127.6" width="11.2" height="9" fill="#000" opacity="0.6"/>
<path d="M45.9,128 V125.2 A2.9,2.9 0 0 1 51.7,125.2 V127" fill="none" stroke="#000" stroke-width="2.6" opacity="0.6"/>
<rect x="39" y="128.2" width="10" height="8" fill="#ececec"/>
<path d="M45.9,128.5 V125.2 A2.9,2.9 0 0 1 51.7,125.2 V127.2" fill="none" stroke="#ececec" stroke-width="1.5"/>
<defs><filter id="sh" x="-5%" y="-5%" width="110%" height="110%"><feGaussianBlur stdDeviation="2"/></filter></defs>
<rect x="206" y="269" width="431" height="610" fill="#000" opacity="0.35" filter="url(#sh)"/>
<rect x="203.5" y="266.5" width="431" height="610" fill="#fff" stroke="#666" stroke-width="1"/>
<path d="M215.5,557.5 V507.5 C220.5,443.5 283,311.5 421,311.5 C559,311.5 621.5,443.5 626.5,507.5 V557.5 Z" fill="none" stroke="#ffc2c2" stroke-width="1"/>
<path d="M214.5,837.5 V789 C219.5,724.3 282,590.5 420,590.5 C558,590.5 620.5,724.3 625.5,789 V837.5 Z" fill="none" stroke="#ffc2c2" stroke-width="1"/>
<rect x="312" y="906" width="969" height="8" rx="4" fill="#a5a5a5"/>
</svg>
<div class="a" style="left:1px;top:923px;width:33px;height:33px;background:#fff"></div>
<svg class="a" style="left:0;top:915px" width="40" height="45"><path d="M4,11 L30.8,37.7 M30.8,11 L4,37.7" stroke="#c8192e" stroke-width="2.9" stroke-linecap="round"/></svg>
<div class="a" style="left:35px;top:923px;width:22px;height:16px;background:#000000;box-shadow:inset 0 0 0 1px rgba(255,255,255,0.06)"></div>
<div class="a" style="left:35px;top:940px;width:22px;height:16px;background:#554400;box-shadow:inset 0 0 0 1px rgba(255,255,255,0.06)"></div>
<div class="a" style="left:58px;top:923px;width:22px;height:16px;background:#1a1a1a;box-shadow:inset 0 0 0 1px rgba(255,255,255,0.06)"></div>
<div class="a" style="left:58px;top:940px;width:22px;height:16px;background:#806600;box-shadow:inset 0 0 0 1px rgba(255,255,255,0.06)"></div>
<div class="a" style="left:81px;top:923px;width:22px;height:16px;background:#333333;box-shadow:inset 0 0 0 1px rgba(255,255,255,0.06)"></div>
<div class="a" style="left:81px;top:940px;width:22px;height:16px;background:#aa8800;box-shadow:inset 0 0 0 1px rgba(255,255,255,0.06)"></div>
<div class="a" style="left:104px;top:923px;width:22px;height:16px;background:#4d4d4d;box-shadow:inset 0 0 0 1px rgba(255,255,255,0.06)"></div>
<div class="a" style="left:104px;top:940px;width:22px;height:16px;background:#d4aa00;box-shadow:inset 0 0 0 1px rgba(255,255,255,0.06)"></div>
<div class="a" style="left:127px;top:923px;width:22px;height:16px;background:#666666;box-shadow:inset 0 0 0 1px rgba(255,255,255,0.06)"></div>
<div class="a" style="left:127px;top:940px;width:22px;height:16px;background:#ffcc00;box-shadow:inset 0 0 0 1px rgba(255,255,255,0.06)"></div>
<div class="a" style="left:150px;top:923px;width:22px;height:16px;background:#808080;box-shadow:inset 0 0 0 1px rgba(255,255,255,0.06)"></div>
<div class="a" style="left:150px;top:940px;width:22px;height:16px;background:#ffd42a;box-shadow:inset 0 0 0 1px rgba(255,255,255,0.06)"></div>
<div class="a" style="left:173px;top:923px;width:22px;height:16px;background:#999999;box-shadow:inset 0 0 0 1px rgba(255,255,255,0.06)"></div>
<div class="a" style="left:173px;top:940px;width:22px;height:16px;background:#ffdd55;box-shadow:inset 0 0 0 1px rgba(255,255,255,0.06)"></div>
<div class="a" style="left:196px;top:923px;width:22px;height:16px;background:#b3b3b3;box-shadow:inset 0 0 0 1px rgba(255,255,255,0.06)"></div>
<div class="a" style="left:196px;top:940px;width:22px;height:16px;background:#ffe680;box-shadow:inset 0 0 0 1px rgba(255,255,255,0.06)"></div>
<div class="a" style="left:219px;top:923px;width:22px;height:16px;background:#cccccc;box-shadow:inset 0 0 0 1px rgba(255,255,255,0.06)"></div>
<div class="a" style="left:219px;top:940px;width:22px;height:16px;background:#ffeeaa;box-shadow:inset 0 0 0 1px rgba(255,255,255,0.06)"></div>
<div class="a" style="left:242px;top:923px;width:22px;height:16px;background:#e6e6e6;box-shadow:inset 0 0 0 1px rgba(255,255,255,0.06)"></div>
<div class="a" style="left:242px;top:940px;width:22px;height:16px;background:#fff6d5;box-shadow:inset 0 0 0 1px rgba(255,255,255,0.06)"></div>
<div class="a" style="left:265px;top:923px;width:22px;height:16px;background:#ececec;box-shadow:inset 0 0 0 1px rgba(255,255,255,0.06)"></div>
<div class="a" style="left:265px;top:940px;width:22px;height:16px;background:#28220b;box-shadow:inset 0 0 0 1px rgba(255,255,255,0.06)"></div>
<div class="a" style="left:288px;top:923px;width:22px;height:16px;background:#f2f2f2;box-shadow:inset 0 0 0 1px rgba(255,255,255,0.06)"></div>
<div class="a" style="left:288px;top:940px;width:22px;height:16px;background:#504416;box-shadow:inset 0 0 0 1px rgba(255,255,255,0.06)"></div>
<div class="a" style="left:311px;top:923px;width:22px;height:16px;background:#f9f9f9;box-shadow:inset 0 0 0 1px rgba(255,255,255,0.06)"></div>
<div class="a" style="left:311px;top:940px;width:22px;height:16px;background:#786721;box-shadow:inset 0 0 0 1px rgba(255,255,255,0.06)"></div>
<div class="a" style="left:334px;top:923px;width:22px;height:16px;background:#ffffff;box-shadow:inset 0 0 0 1px rgba(255,255,255,0.06)"></div>
<div class="a" style="left:334px;top:940px;width:22px;height:16px;background:#a0892c;box-shadow:inset 0 0 0 1px rgba(255,255,255,0.06)"></div>
<div class="a" style="left:357px;top:923px;width:22px;height:16px;background:#800000;box-shadow:inset 0 0 0 1px rgba(255,255,255,0.06)"></div>
<div class="a" style="left:357px;top:940px;width:22px;height:16px;background:#c8ab37;box-shadow:inset 0 0 0 1px rgba(255,255,255,0.06)"></div>
<div class="a" style="left:380px;top:923px;width:22px;height:16px;background:#ff0000;box-shadow:inset 0 0 0 1px rgba(255,255,255,0.06)"></div>
<div class="a" style="left:380px;top:940px;width:22px;height:16px;background:#d3bc5f;box-shadow:inset 0 0 0 1px rgba(255,255,255,0.06)"></div>
<div class="a" style="left:403px;top:923px;width:22px;height:16px;background:#808000;box-shadow:inset 0 0 0 1px rgba(255,255,255,0.06)"></div>
<div class="a" style="left:403px;top:940px;width:22px;height:16px;background:#decd87;box-shadow:inset 0 0 0 1px rgba(255,255,255,0.06)"></div>
<div class="a" style="left:426px;top:923px;width:22px;height:16px;background:#ffff00;box-shadow:inset 0 0 0 1px rgba(255,255,255,0.06)"></div>
<div class="a" style="left:426px;top:940px;width:22px;height:16px;background:#e9ddaf;box-shadow:inset 0 0 0 1px rgba(255,255,255,0.06)"></div>
<div class="a" style="left:449px;top:923px;width:22px;height:16px;background:#008000;box-shadow:inset 0 0 0 1px rgba(255,255,255,0.06)"></div>
<div class="a" style="left:449px;top:940px;width:22px;height:16px;background:#f4eed7;box-shadow:inset 0 0 0 1px rgba(255,255,255,0.06)"></div>
<div class="a" style="left:472px;top:923px;width:22px;height:16px;background:#00ff00;box-shadow:inset 0 0 0 1px rgba(255,255,255,0.06)"></div>
<div class="a" style="left:472px;top:940px;width:22px;height:16px;background:#24221c;box-shadow:inset 0 0 0 1px rgba(255,255,255,0.06)"></div>
<div class="a" style="left:495px;top:923px;width:22px;height:16px;background:#008080;box-shadow:inset 0 0 0 1px rgba(255,255,255,0.06)"></div>
<div class="a" style="left:495px;top:940px;width:22px;height:16px;background:#484537;box-shadow:inset 0 0 0 1px rgba(255,255,255,0.06)"></div>
<div class="a" style="left:518px;top:923px;width:22px;height:16px;background:#00ffff;box-shadow:inset 0 0 0 1px rgba(255,255,255,0.06)"></div>
<div class="a" style="left:518px;top:940px;width:22px;height:16px;background:#6c6753;box-shadow:inset 0 0 0 1px rgba(255,255,255,0.06)"></div>
<div class="a" style="left:541px;top:923px;width:22px;height:16px;background:#000080;box-shadow:inset 0 0 0 1px rgba(255,255,255,0.06)"></div>
<div class="a" style="left:541px;top:940px;width:22px;height:16px;background:#918a6f;box-shadow:inset 0 0 0 1px rgba(255,255,255,0.06)"></div>
<div class="a" style="left:564px;top:923px;width:22px;height:16px;background:#0000ff;box-shadow:inset 0 0 0 1px rgba(255,255,255,0.06)"></div>
<div class="a" style="left:564px;top:940px;width:22px;height:16px;background:#aca793;box-shadow:inset 0 0 0 1px rgba(255,255,255,0.06)"></div>
<div class="a" style="left:587px;top:923px;width:22px;height:16px;background:#800080;box-shadow:inset 0 0 0 1px rgba(255,255,255,0.06)"></div>
<div class="a" style="left:587px;top:940px;width:22px;height:16px;background:#c8c4b7;box-shadow:inset 0 0 0 1px rgba(255,255,255,0.06)"></div>
<div class="a" style="left:610px;top:923px;width:22px;height:16px;background:#ff00ff;box-shadow:inset 0 0 0 1px rgba(255,255,255,0.06)"></div>
<div class="a" style="left:610px;top:940px;width:22px;height:16px;background:#e3e2db;box-shadow:inset 0 0 0 1px rgba(255,255,255,0.06)"></div>
<div class="a" style="left:633px;top:923px;width:22px;height:16px;background:#2b0000;box-shadow:inset 0 0 0 1px rgba(255,255,255,0.06)"></div>
<div class="a" style="left:633px;top:940px;width:22px;height:16px;background:#222b00;box-shadow:inset 0 0 0 1px rgba(255,255,255,0.06)"></div>
<div class="a" style="left:656px;top:923px;width:22px;height:16px;background:#550000;box-shadow:inset 0 0 0 1px rgba(255,255,255,0.06)"></div>
<div class="a" style="left:656px;top:940px;width:22px;height:16px;background:#445500;box-shadow:inset 0 0 0 1px rgba(255,255,255,0.06)"></div>
<div class="a" style="left:679px;top:923px;width:22px;height:16px;background:#800000;box-shadow:inset 0 0 0 1px rgba(255,255,255,0.06)"></div>
<div class="a" style="left:679px;top:940px;width:22px;height:16px;background:#668000;box-shadow:inset 0 0 0 1px rgba(255,255,255,0.06)"></div>
<div class="a" style="left:702px;top:923px;width:22px;height:16px;background:#aa0000;box-shadow:inset 0 0 0 1px rgba(255,255,255,0.06)"></div>
<div class="a" style="left:702px;top:940px;width:22px;height:16px;background:#88aa00;box-shadow:inset 0 0 0 1px rgba(255,255,255,0.06)"></div>
<div class="a" style="left:725px;top:923px;width:22px;height:16px;background:#d40000;box-shadow:inset 0 0 0 1px rgba(255,255,255,0.06)"></div>
<div class="a" style="left:725px;top:940px;width:22px;height:16px;background:#aad400;box-shadow:inset 0 0 0 1px rgba(255,255,255,0.06)"></div>
<div class="a" style="left:748px;top:923px;width:22px;height:16px;background:#ff0000;box-shadow:inset 0 0 0 1px rgba(255,255,255,0.06)"></div>
<div class="a" style="left:748px;top:940px;width:22px;height:16px;background:#ccff00;box-shadow:inset 0 0 0 1px rgba(255,255,255,0.06)"></div>
<div class="a" style="left:771px;top:923px;width:22px;height:16px;background:#ff2a2a;box-shadow:inset 0 0 0 1px rgba(255,255,255,0.06)"></div>
<div class="a" style="left:771px;top:940px;width:22px;height:16px;background:#d4ff2a;box-shadow:inset 0 0 0 1px rgba(255,255,255,0.06)"></div>
<div class="a" style="left:794px;top:923px;width:22px;height:16px;background:#ff5555;box-shadow:inset 0 0 0 1px rgba(255,255,255,0.06)"></div>
<div class="a" style="left:794px;top:940px;width:22px;height:16px;background:#ddff55;box-shadow:inset 0 0 0 1px rgba(255,255,255,0.06)"></div>
<div class="a" style="left:817px;top:923px;width:22px;height:16px;background:#ff8080;box-shadow:inset 0 0 0 1px rgba(255,255,255,0.06)"></div>
<div class="a" style="left:817px;top:940px;width:22px;height:16px;background:#e5ff80;box-shadow:inset 0 0 0 1px rgba(255,255,255,0.06)"></div>
<div class="a" style="left:840px;top:923px;width:22px;height:16px;background:#ffaaaa;box-shadow:inset 0 0 0 1px rgba(255,255,255,0.06)"></div>
<div class="a" style="left:840px;top:940px;width:22px;height:16px;background:#eeffaa;box-shadow:inset 0 0 0 1px rgba(255,255,255,0.06)"></div>
<div class="a" style="left:863px;top:923px;width:22px;height:16px;background:#ffd5d5;box-shadow:inset 0 0 0 1px rgba(255,255,255,0.06)"></div>
<div class="a" style="left:863px;top:940px;width:22px;height:16px;background:#f6ffd5;box-shadow:inset 0 0 0 1px rgba(255,255,255,0.06)"></div>
<div class="a" style="left:886px;top:923px;width:21px;height:16px;background:#280b0b;box-shadow:inset 0 0 0 1px rgba(255,255,255,0.06)"></div>
<div class="a" style="left:886px;top:940px;width:21px;height:16px;background:#22280b;box-shadow:inset 0 0 0 1px rgba(255,255,255,0.06)"></div>
<div class="a" style="left:908px;top:923px;width:21px;height:16px;background:#501616;box-shadow:inset 0 0 0 1px rgba(255,255,255,0.06)"></div>
<div class="a" style="left:908px;top:940px;width:21px;height:16px;background:#445016;box-shadow:inset 0 0 0 1px rgba(255,255,255,0.06)"></div>
<div class="a" style="left:930px;top:923px;width:21px;height:16px;background:#782121;box-shadow:inset 0 0 0 1px rgba(255,255,255,0.06)"></div>
<div class="a" style="left:930px;top:940px;width:21px;height:16px;background:#677821;box-shadow:inset 0 0 0 1px rgba(255,255,255,0.06)"></div>
<div class="a" style="left:952px;top:923px;width:21px;height:16px;background:#a02c2c;box-shadow:inset 0 0 0 1px rgba(255,255,255,0.06)"></div>
<div class="a" style="left:952px;top:940px;width:21px;height:16px;background:#89a02c;box-shadow:inset 0 0 0 1px rgba(255,255,255,0.06)"></div>
<div class="a" style="left:974px;top:923px;width:21px;height:16px;background:#c83737;box-shadow:inset 0 0 0 1px rgba(255,255,255,0.06)"></div>
<div class="a" style="left:974px;top:940px;width:21px;height:16px;background:#abc837;box-shadow:inset 0 0 0 1px rgba(255,255,255,0.06)"></div>
<div class="a" style="left:996px;top:923px;width:21px;height:16px;background:#d35f5f;box-shadow:inset 0 0 0 1px rgba(255,255,255,0.06)"></div>
<div class="a" style="left:996px;top:940px;width:21px;height:16px;background:#bcd35f;box-shadow:inset 0 0 0 1px rgba(255,255,255,0.06)"></div>
<div class="a" style="left:1018px;top:923px;width:21px;height:16px;background:#de8787;box-shadow:inset 0 0 0 1px rgba(255,255,255,0.06)"></div>
<div class="a" style="left:1018px;top:940px;width:21px;height:16px;background:#cdde87;box-shadow:inset 0 0 0 1px rgba(255,255,255,0.06)"></div>
<div class="a" style="left:1040px;top:923px;width:21px;height:16px;background:#e9afaf;box-shadow:inset 0 0 0 1px rgba(255,255,255,0.06)"></div>
<div class="a" style="left:1040px;top:940px;width:21px;height:16px;background:#dee9af;box-shadow:inset 0 0 0 1px rgba(255,255,255,0.06)"></div>
<div class="a" style="left:1062px;top:923px;width:21px;height:16px;background:#f4d7d7;box-shadow:inset 0 0 0 1px rgba(255,255,255,0.06)"></div>
<div class="a" style="left:1062px;top:940px;width:21px;height:16px;background:#eef4d7;box-shadow:inset 0 0 0 1px rgba(255,255,255,0.06)"></div>
<div class="a" style="left:1084px;top:923px;width:21px;height:16px;background:#241c1c;box-shadow:inset 0 0 0 1px rgba(255,255,255,0.06)"></div>
<div class="a" style="left:1084px;top:940px;width:21px;height:16px;background:#22241c;box-shadow:inset 0 0 0 1px rgba(255,255,255,0.06)"></div>
<div class="a" style="left:1106px;top:923px;width:21px;height:16px;background:#483737;box-shadow:inset 0 0 0 1px rgba(255,255,255,0.06)"></div>
<div class="a" style="left:1106px;top:940px;width:21px;height:16px;background:#454837;box-shadow:inset 0 0 0 1px rgba(255,255,255,0.06)"></div>
<div class="a" style="left:1128px;top:923px;width:21px;height:16px;background:#6c5353;box-shadow:inset 0 0 0 1px rgba(255,255,255,0.06)"></div>
<div class="a" style="left:1128px;top:940px;width:21px;height:16px;background:#676c53;box-shadow:inset 0 0 0 1px rgba(255,255,255,0.06)"></div>
<div class="a" style="left:1150px;top:923px;width:21px;height:16px;background:#916f6f;box-shadow:inset 0 0 0 1px rgba(255,255,255,0.06)"></div>
<div class="a" style="left:1150px;top:940px;width:21px;height:16px;background:#89916f;box-shadow:inset 0 0 0 1px rgba(255,255,255,0.06)"></div>
<div class="a" style="left:1172px;top:923px;width:21px;height:16px;background:#ac9393;box-shadow:inset 0 0 0 1px rgba(255,255,255,0.06)"></div>
<div class="a" style="left:1172px;top:940px;width:21px;height:16px;background:#a7ac93;box-shadow:inset 0 0 0 1px rgba(255,255,255,0.06)"></div>
<div class="a" style="left:1194px;top:923px;width:21px;height:16px;background:#c8b7b7;box-shadow:inset 0 0 0 1px rgba(255,255,255,0.06)"></div>
<div class="a" style="left:1194px;top:940px;width:21px;height:16px;background:#c6c8b7;box-shadow:inset 0 0 0 1px rgba(255,255,255,0.06)"></div>
<div class="a" style="left:1216px;top:923px;width:21px;height:16px;background:#e3dbdb;box-shadow:inset 0 0 0 1px rgba(255,255,255,0.06)"></div>
<div class="a" style="left:1216px;top:940px;width:21px;height:16px;background:#e3e4db;box-shadow:inset 0 0 0 1px rgba(255,255,255,0.06)"></div>
<div class="a" style="left:1238px;top:923px;width:21px;height:16px;background:#2b1100;box-shadow:inset 0 0 0 1px rgba(255,255,255,0.06)"></div>
<div class="a" style="left:1238px;top:940px;width:21px;height:16px;background:#112b00;box-shadow:inset 0 0 0 1px rgba(255,255,255,0.06)"></div>
<div class="a" style="left:1260px;top:923px;width:21px;height:16px;background:#552200;box-shadow:inset 0 0 0 1px rgba(255,255,255,0.06)"></div>
<div class="a" style="left:1260px;top:940px;width:21px;height:16px;background:#225500;box-shadow:inset 0 0 0 1px rgba(255,255,255,0.06)"></div>
<div class="a" style="left:1282px;top:923px;width:21px;height:16px;background:#803300;box-shadow:inset 0 0 0 1px rgba(255,255,255,0.06)"></div>
<div class="a" style="left:1282px;top:940px;width:21px;height:16px;background:#338000;box-shadow:inset 0 0 0 1px rgba(255,255,255,0.06)"></div>
<div class="a" style="left:219px;top:958px;width:75px;height:20px;border-radius:5px;border:1px solid #222"></div>
<div class="a" style="left:259px;top:959px;width:1px;height:6px;background:#2a2a2a"></div>
<div class="a" style="left:277px;top:959px;width:1px;height:6px;background:#2a2a2a"></div>
<svg class="a" style="left:0;top:0" width="1285" height="964" font-family="Liberation Sans"><defs><linearGradient id="lg" x1="0.3" y1="0.1" x2="0.8" y2="0.9"><stop offset="0" stop-color="#ffffff"/><stop offset="0.45" stop-color="#d8dde6"/><stop offset="1" stop-color="#4a6a9a"/></linearGradient></defs>
<path d="M12.3,5.6 Q13.5,4.6 14.7,5.6 L24.8,15.6 Q25.2,16.6 24,17.4 Q19.5,19.8 13.5,20 Q7.5,19.8 3,17.4 Q2,16.6 2.4,15.6 Z" fill="#0a0a0a"/>
<path d="M13.5,6.6 L23.2,16.2 Q19,18.4 13.5,18.6 Q8,18.4 4,16.2 Z" fill="url(#lg)"/>
<path d="M9.8,17.8 Q10.2,14.2 12.2,14.2 Q13.6,11.8 15.4,13.6 Q18,14.6 18.4,18 Q14,19.8 9.8,17.8 Z" fill="#000"/>
<path d="M6,19.6 Q10,18.8 13.5,19 Q18,18.8 20,21 Q17,22.6 16,24.6 Q14.5,27.6 13.3,27.3 Q11,25.4 10.8,23.4 Q8,22.4 6,19.6 Z" fill="#161616"/>
<path d="M8,21 Q11,20.2 14.5,20.6 Q11,21.8 8,21 Z" fill="#8a8a8a"/>
<path d="M11.5,23 Q13.5,22.6 15,23 Q14,25.5 13.3,26 Q12.2,24.6 11.5,23 Z" fill="#3a3a3a"/>
<ellipse cx="8.1" cy="24.4" rx="1.1" ry="0.6" fill="#111"/>
<ellipse cx="22.4" cy="22.6" rx="1" ry="0.7" fill="#1a1a1a"/>
<rect x="14" y="82" width="1" height="1" fill="#f4f4f4"/>
<rect x="14" y="96" width="1" height="1" fill="#f4f4f4"/>
<rect x="14" y="82" width="1" height="1" fill="#f4f4f4"/>
<rect x="28" y="82" width="1" height="1" fill="#f4f4f4"/>
<rect x="16" y="82" width="1" height="1" fill="#f4f4f4"/>
<rect x="16" y="96" width="1" height="1" fill="#f4f4f4"/>
<rect x="14" y="84" width="1" height="1" fill="#f4f4f4"/>
<rect x="28" y="84" width="1" height="1" fill="#f4f4f4"/>
<rect x="18" y="82" width="1" height="1" fill="#f4f4f4"/>
<rect x="18" y="96" width="1" height="1" fill="#f4f4f4"/>
<rect x="14" y="86" width="1" height="1" fill="#f4f4f4"/>
<rect x="28" y="86" width="1" height="1" fill="#f4f4f4"/>
<rect x="20" y="82" width="1" height="1" fill="#f4f4f4"/>
<rect x="20" y="96" width="1" height="1" fill="#f4f4f4"/>
<rect x="14" y="88" width="1" height="1" fill="#f4f4f4"/>
<rect x="28" y="88" width="1" height="1" fill="#f4f4f4"/>
<rect x="22" y="82" width="1" height="1" fill="#f4f4f4"/>
<rect x="22" y="96" width="1" height="1" fill="#f4f4f4"/>
<rect x="14" y="90" width="1" height="1" fill="#f4f4f4"/>
<rect x="28" y="90" width="1" height="1" fill="#f4f4f4"/>
<rect x="24" y="82" width="1" height="1" fill="#f4f4f4"/>
<rect x="24" y="96" width="1" height="1" fill="#f4f4f4"/>
<rect x="14" y="92" width="1" height="1" fill="#f4f4f4"/>
<rect x="28" y="92" width="1" height="1" fill="#f4f4f4"/>
<rect x="26" y="82" width="1" height="1" fill="#f4f4f4"/>
<rect x="26" y="96" width="1" height="1" fill="#f4f4f4"/>
<rect x="14" y="94" width="1" height="1" fill="#f4f4f4"/>
<rect x="28" y="94" width="1" height="1" fill="#f4f4f4"/>
<rect x="28" y="82" width="1" height="1" fill="#f4f4f4"/>
<rect x="28" y="96" width="1" height="1" fill="#f4f4f4"/>
<rect x="14" y="96" width="1" height="1" fill="#f4f4f4"/>
<rect x="28" y="96" width="1" height="1" fill="#f4f4f4"/>
<rect x="16" y="90" width="8" height="5" fill="#e8e8e8"/>
<circle cx="23.4" cy="88" r="4.4" fill="#333"/>
<circle cx="23.4" cy="88" r="3.5" fill="#e8e8e8"/>
<rect x="55" y="82" width="1" height="1" fill="#f4f4f4"/>
<rect x="55" y="96" width="1" height="1" fill="#f4f4f4"/>
<rect x="55" y="82" width="1" height="1" fill="#f4f4f4"/>
<rect x="69" y="82" width="1" height="1" fill="#f4f4f4"/>
<rect x="57" y="82" width="1" height="1" fill="#f4f4f4"/>
<rect x="57" y="96" width="1" height="1" fill="#f4f4f4"/>
<rect x="55" y="84" width="1" height="1" fill="#f4f4f4"/>
<rect x="69" y="84" width="1" height="1" fill="#f4f4f4"/>
<rect x="59" y="82" width="1" height="1" fill="#f4f4f4"/>
<rect x="59" y="96" width="1" height="1" fill="#f4f4f4"/>
<rect x="55" y="86" width="1" height="1" fill="#f4f4f4"/>
<rect x="69" y="86" width="1" height="1" fill="#f4f4f4"/>
<rect x="61" y="82" width="1" height="1" fill="#f4f4f4"/>
<rect x="61" y="96" width="1" height="1" fill="#f4f4f4"/>
<rect x="55" y="88" width="1" height="1" fill="#f4f4f4"/>
<rect x="69" y="88" width="1" height="1" fill="#f4f4f4"/>
<rect x="63" y="82" width="1" height="1" fill="#f4f4f4"/>
<rect x="63" y="96" width="1" height="1" fill="#f4f4f4"/>
<rect x="55" y="90" width="1" height="1" fill="#f4f4f4"/>
<rect x="69" y="90" width="1" height="1" fill="#f4f4f4"/>
<rect x="65" y="82" width="1" height="1" fill="#f4f4f4"/>
<rect x="65" y="96" width="1" height="1" fill="#f4f4f4"/>
<rect x="55" y="92" width="1" height="1" fill="#f4f4f4"/>
<rect x="69" y="92" width="1" height="1" fill="#f4f4f4"/>
<rect x="67" y="82" width="1" height="1" fill="#f4f4f4"/>
<rect x="67" y="96" width="1" height="1" fill="#f4f4f4"/>
<rect x="55" y="94" width="1" height="1" fill="#f4f4f4"/>
<rect x="69" y="94" width="1" height="1" fill="#f4f4f4"/>
<rect x="69" y="82" width="1" height="1" fill="#f4f4f4"/>
<rect x="69" y="96" width="1" height="1" fill="#f4f4f4"/>
<rect x="55" y="96" width="1" height="1" fill="#f4f4f4"/>
<rect x="69" y="96" width="1" height="1" fill="#f4f4f4"/>
<path d="M57.2,87.2 L59.8,84 L67.8,84 L65.4,87.2 Z" fill="#d6d6d6"/>
<path d="M57.2,91.2 L59.8,88 L67.8,88 L65.4,91.2 Z" fill="#d6d6d6"/>
<path d="M57.2,95.2 L59.8,92 L67.8,92 L65.4,95.2 Z" fill="#d6d6d6"/>
<rect x="96" y="82" width="1" height="1" fill="#9c9c9c"/>
<rect x="96" y="96" width="1" height="1" fill="#9c9c9c"/>
<rect x="96" y="82" width="1" height="1" fill="#9c9c9c"/>
<rect x="110" y="82" width="1" height="1" fill="#9c9c9c"/>
<rect x="98" y="82" width="1" height="1" fill="#9c9c9c"/>
<rect x="98" y="96" width="1" height="1" fill="#9c9c9c"/>
<rect x="96" y="84" width="1" height="1" fill="#9c9c9c"/>
<rect x="110" y="84" width="1" height="1" fill="#9c9c9c"/>
<rect x="100" y="82" width="1" height="1" fill="#9c9c9c"/>
<rect x="100" y="96" width="1" height="1" fill="#9c9c9c"/>
<rect x="96" y="86" width="1" height="1" fill="#9c9c9c"/>
<rect x="110" y="86" width="1" height="1" fill="#9c9c9c"/>
<rect x="102" y="82" width="1" height="1" fill="#9c9c9c"/>
<rect x="102" y="96" width="1" height="1" fill="#9c9c9c"/>
<rect x="96" y="88" width="1" height="1" fill="#9c9c9c"/>
<rect x="110" y="88" width="1" height="1" fill="#9c9c9c"/>
<rect x="104" y="82" width="1" height="1" fill="#9c9c9c"/>
<rect x="104" y="96" width="1" height="1" fill="#9c9c9c"/>
<rect x="96" y="90" width="1" height="1" fill="#9c9c9c"/>
<rect x="110" y="90" width="1" height="1" fill="#9c9c9c"/>
<rect x="106" y="82" width="1" height="1" fill="#9c9c9c"/>
<rect x="106" y="96" width="1" height="1" fill="#9c9c9c"/>
<rect x="96" y="92" width="1" height="1" fill="#9c9c9c"/>
<rect x="110" y="92" width="1" height="1" fill="#9c9c9c"/>
<rect x="108" y="82" width="1" height="1" fill="#9c9c9c"/>
<rect x="108" y="96" width="1" height="1" fill="#9c9c9c"/>
<rect x="96" y="94" width="1" height="1" fill="#9c9c9c"/>
<rect x="110" y="94" width="1" height="1" fill="#9c9c9c"/>
<rect x="110" y="82" width="1" height="1" fill="#9c9c9c"/>
<rect x="110" y="96" width="1" height="1" fill="#9c9c9c"/>
<rect x="96" y="96" width="1" height="1" fill="#9c9c9c"/>
<rect x="110" y="96" width="1" height="1" fill="#9c9c9c"/>
<rect x="98" y="90" width="8" height="5" fill="#8c8c8c"/>
<circle cx="105.5" cy="87.8" r="4.4" fill="#333"/>
<circle cx="105.5" cy="87.8" r="3.6" fill="#8c8c8c"/>
<path d="M138.5,86.5 H147 M138.5,86.5 V96.5 H148.5 V89" fill="none" stroke="#f4f4f4" stroke-width="1" stroke-dasharray="2,1.5"/>
<rect x="147" y="83" width="5" height="5" fill="#ececec" stroke="#fff" stroke-width="0.6"/>
<rect x="195" y="82" width="5" height="10" fill="#999"/>
<rect x="184" y="93" width="10" height="5" fill="#ececec"/>
<path d="M193,84.6 Q189.2,84.8 188.3,88.3" fill="none" stroke="#00a000" stroke-width="2.2"/>
<path d="M185,88 L191.5,88 L188.2,91.6 Z" fill="#00a000"/>
<rect x="225" y="82" width="5" height="10" fill="#999"/>
<rect x="231" y="93" width="10" height="5" fill="#ececec"/>
<path d="M232,84.6 Q235.8,84.8 236.7,88.3" fill="none" stroke="#00a000" stroke-width="2.2"/>
<path d="M233.5,88 L240,88 L236.8,91.6 Z" fill="#00a000"/>
<path d="M273,85 L267,95 L273,95 Z" fill="#8a8a8a"/>
<path d="M276,85 L282,95 L276,95 Z" fill="#ececec"/>
<path d="M274.5,82.5 V97.5" stroke="#f4f4f4" stroke-width="1.5" stroke-dasharray="2,1"/>
<path d="M310,83 L320,89 L310,89 Z" fill="#8a8a8a"/>
<path d="M310,92 L320,92 L310,98 Z" fill="#ececec"/>
<path d="M308,90.5 H322.5" stroke="#f4f4f4" stroke-width="1.5" stroke-dasharray="2,1"/>
<rect x="355" y="83" width="13" height="2" fill="#fafafa"/>
<rect x="355" y="87" width="5" height="2" fill="#a0a0a0"/>
<rect x="355" y="91" width="5" height="2" fill="#a0a0a0"/>
<rect x="355" y="95" width="5" height="2" fill="#a0a0a0"/>
<path d="M364,97 V90 H362 L365,87 L368,90 H366 V97 Z" fill="#00a000"/>
<rect x="396" y="83" width="5" height="2" fill="#a0a0a0"/>
<rect x="396" y="87" width="13" height="2" fill="#fafafa"/>
<rect x="396" y="91" width="5" height="2" fill="#a0a0a0"/>
<rect x="396" y="95" width="5" height="2" fill="#a0a0a0"/>
<path d="M405,97 V93 H403 L406,90.2 L409,93 H407 V97 Z" fill="#00a000"/>
<rect x="437" y="83" width="5" height="2" fill="#a0a0a0"/>
<rect x="437" y="87" width="5" height="2" fill="#a0a0a0"/>
<rect x="437" y="91" width="13" height="2" fill="#fafafa"/>
<rect x="437" y="95" width="5" height="2" fill="#a0a0a0"/>
<path d="M446,83 V87 H444 L447,89.8 L450,87 H448 V83 Z" fill="#00a000"/>
<rect x="478" y="83" width="5" height="2" fill="#a0a0a0"/>
<rect x="478" y="87" width="5" height="2" fill="#a0a0a0"/>
<rect x="478" y="91" width="5" height="2" fill="#a0a0a0"/>
<rect x="478" y="95" width="13" height="2" fill="#fafafa"/>
<path d="M487,83 V90 H485 L488,93 L491,90 H489 V83 Z" fill="#00a000"/>
<rect x="1039" y="89" width="10" height="8" fill="#ececec"/>
<path d="M1046.5,89 V86 A2.6,2.6 0 0 1 1051.7,86 V87.5" fill="none" stroke="#ececec" stroke-width="1.6"/>
<rect x="0" y="211" width="26" height="1" fill="#2b2b2b"/>
<rect x="0" y="374" width="26" height="1" fill="#2b2b2b"/>
<rect x="0" y="506" width="26" height="1" fill="#2b2b2b"/>
<rect x="0" y="636" width="26" height="1" fill="#2b2b2b"/>
<rect x="0" y="799" width="26" height="1" fill="#2b2b2b"/>
<path d="M8,123.6 L19.4,129.6 L15.6,131.6 L14.4,136.4 L12.5,136.1 L11.1,132.6 L8,135.4 Z" fill="#1f4a80" stroke="#f4f4f4" stroke-width="1.9" stroke-linejoin="round"/>
<path d="M6.3,168 Q6.5,158 13,156.5 Q16,155.4 19.2,155" fill="none" stroke="#bdbdbd" stroke-width="0.9"/>
<rect x="7.4" y="156.4" width="5.2" height="5.2" fill="#333" stroke="#f4f4f4" stroke-width="1.3"/>
<rect x="9.4" y="158.4" width="1.3" height="1.3" fill="#111"/>
<path d="M15.2,163 L19.9,165.6 L15.2,168.5 Z" fill="#f0f0f0"/>
<circle cx="10.9" cy="191.8" r="4" fill="none" stroke="#f4f4f4" stroke-width="1.4"/>
<rect x="12" y="192.9" width="7.2" height="7.2" fill="none" stroke="#f4f4f4" stroke-width="1.5"/>
<rect x="6.9" y="223" width="12.1" height="12.1" rx="1.5" fill="#ff1590" stroke="#f4f4f4" stroke-width="1.8"/>
<circle cx="12.9" cy="261.1" r="6.2" fill="#c8216f" stroke="#f4f4f4" stroke-width="1.8"/>
<path d="M10.6,287 L15.3,291 L13.4,295.8 L7.4,295.9 L5.6,291 Z" fill="#a01e5f" stroke="#f4f4f4" stroke-width="1.2" stroke-linejoin="round"/>
<path d="M14.90,289.60 L16.31,293.26 L20.23,293.47 L17.18,295.94 L18.19,299.73 L14.90,297.60 L11.61,299.73 L12.62,295.94 L9.57,293.47 L13.49,293.26 Z" fill="#5c1942" stroke="#f4f4f4" stroke-width="1.2" stroke-linejoin="round"/>
<path d="M12.9,318 L19.3,321.6 L19.3,328.8 L12.9,332.2 L6.5,328.8 L6.5,321.6 Z" fill="#8c2060" stroke="#f4f4f4" stroke-width="1.5" stroke-linejoin="round"/>
<path d="M12.9,318 L19.3,321.6 L12.9,325 L6.5,321.6 Z" fill="#5a2040"/>
<path d="M6.5,321.6 L12.9,325 L12.9,332.2 L6.5,328.8 Z" fill="#ff1590"/>
<path d="M6.5,321.6 L12.9,325 L19.3,321.6 M12.9,325 V332.2" fill="none" stroke="#f4f4f4" stroke-width="1.3"/>
<path d="M12.9,318 L19.3,321.6 L19.3,328.8 L12.9,332.2 L6.5,328.8 L6.5,321.6 Z" fill="none" stroke="#f4f4f4" stroke-width="1.5" stroke-linejoin="round"/>
<path d="M17.76,362.00 L18.20,361.37 L18.56,360.69 L18.84,359.99 L19.05,359.26 L19.17,358.51 L19.21,357.76 L19.15,357.02 L19.01,356.29 L18.79,355.58 L18.49,354.91 L18.13,354.28 L17.70,353.70 L17.22,353.18 L16.68,352.71 L16.10,352.31 L15.49,351.98 L14.84,351.72 L14.18,351.53 L13.51,351.42 L12.83,351.38 L12.16,351.42 L11.50,351.53 L10.86,351.72 L10.25,351.97 L9.68,352.28 L9.15,352.65 L8.67,353.07 L8.24,353.54 L7.87,354.05 L7.56,354.59 L7.32,355.16 L7.14,355.75 L7.03,356.35 L6.98,356.95 L7.00,357.55 L7.09,358.13 L7.24,358.70 L7.45,359.24 L7.71,359.76 L8.03,360.23 L8.40,360.66 L8.80,361.05 L9.24,361.38 L9.72,361.67 L10.21,361.89 L10.72,362.06 L11.24,362.17 L11.77,362.22 L12.29,362.21 L12.81,362.14 L13.30,362.02 L13.78,361.85 L14.23,361.63 L14.65,361.36 L15.03,361.05 L15.37,360.70 L15.66,360.33 L15.91,359.92 L16.12,359.50 L16.27,359.06 L16.37,358.62 L16.42,358.17 L16.42,357.72 L16.37,357.28 L16.27,356.85 L16.13,356.44 L15.95,356.06 L15.72,355.70 L15.47,355.38 L15.18,355.08 L14.86,354.83 L14.53,354.62 L14.17,354.44 L13.81,354.31 L13.43,354.22 L13.06,354.18 L12.69,354.17 L12.32,354.21 L11.97,354.29 L11.63,354.40 L11.31,354.55 L11.02,354.73 L10.75,354.94 L10.51,355.18 L10.30,355.44 L10.12,355.71 L9.98,355.99 L9.88,356.29 L9.80,356.59 L9.77,356.89 L9.77,357.19 L9.80,357.48 L9.86,357.76 L9.95,358.03 L10.07,358.28 L10.21,358.51 L10.38,358.72 L10.57,358.90 L10.77,359.06 L10.98,359.19 L11.20,359.30 L11.43,359.38 L11.66,359.43 L11.89,359.45 L12.11,359.44 L12.33,359.42 L12.53,359.36 L12.73,359.29 L12.91,359.20 L13.07,359.08 L13.22,358.96 L13.34,358.82 L13.45,358.67 L13.54,358.52 L13.60,358.36 L13.65,358.20 L13.67,358.04 L13.67,357.88 L13.66,357.73 L13.63,357.59" fill="none" stroke="#f4f4f4" stroke-width="1.9" stroke-linecap="round" stroke-linejoin="round"/>
<path d="M7.5,392.6 Q9.5,386.5 16.8,385.5" fill="none" stroke="#aaaaaa" stroke-width="0.9"/>
<line x1="7" y1="386" x2="7" y2="394" stroke="#00a000" stroke-width="1"/>
<circle cx="7" cy="385.8" r="2" fill="#00a400"/>
<rect x="5" y="393" width="4" height="4" fill="#00a400"/>
<path d="M10.4,400 L12.2,393.4 L17.4,388.4 L21.4,392.4 L16.6,397.6 Z" fill="#f0f0f0"/>
<circle cx="15.6" cy="394.2" r="1.1" fill="#222"/>
<path d="M10.6,399.8 L15.2,394.6" stroke="#333" stroke-width="0.6"/>
<path d="M6.3,418.6 Q9.6,416.4 12.2,419 Q13.6,421.6 9.6,423.3 Q5.9,425 7.8,428" fill="none" stroke="#00a400" stroke-width="1.6" stroke-linecap="round"/>
<path d="M10,427.6 L17.6,420.1 L20.7,423.2 L13.1,430.7 Z" fill="#ececec"/>
<path d="M17.6,420.1 L18.5,419.2 Q19.3,418.5 20.5,419.6 L21.4,420.5 Q21.7,421.6 20.7,422.6 Z" fill="#ececec"/>
<path d="M10,427.6 L13.1,430.7 L7.5,431.4 Z" fill="#00a400"/>
<path d="M8.6,448.9 Q12,450 11.2,453 Q10.5,455 7.5,455.2 Q6,455.8 6.4,457" fill="none" stroke="#00a400" stroke-width="1.6" stroke-linecap="round"/>
<path d="M13.2,455 L19.6,449.4 Q20.6,449.4 20.4,450.4 L15.2,457 Z" fill="#ececec"/>
<path d="M10.8,458.4 L12.8,455.8 L15,457.8 L12.4,460 Z" fill="#ececec"/>
<path d="M11,459.6 Q8,460.2 6,463 Q9.8,463 12.2,460.8 Z" fill="#00a400"/>
<path d="M5,494.1 L9.4,482.9 L12.7,482.9 L17.1,494.1 L14.4,494.1 L13.5,491.6 L8.6,491.6 L7.7,494.1 Z M9.4,489.4 L12.7,489.4 L11.05,484.9 Z" fill="#ececec" fill-rule="evenodd"/>
<rect x="19" y="480" width="2.1" height="16" fill="#00a400"/>
<defs><linearGradient id="gr" x1="0" y1="0" x2="1" y2="1"><stop offset="0" stop-color="#0d90e6"/><stop offset="0.65" stop-color="#5ab8ee"/><stop offset="1" stop-color="#ffffff"/></linearGradient><radialGradient id="mg" cx="0.5" cy="0.5" r="0.5"><stop offset="0" stop-color="#0aa0f5"/><stop offset="0.35" stop-color="#0a6eb0"/><stop offset="0.75" stop-color="#123048" stop-opacity="0.8"/><stop offset="1" stop-color="#1c1c1c" stop-opacity="0"/></radialGradient></defs>
<rect x="5.5" y="515.5" width="15" height="15" fill="none" stroke="#f0f0f0" stroke-width="1.2"/>
<rect x="7" y="517" width="12" height="12" fill="url(#gr)"/>
<rect x="5.6" y="547.6" width="14.8" height="14.8" fill="#1c1c1c"/>
<rect x="5.6" y="547.6" width="14.8" height="14.8" fill="url(#mg)"/>
<rect x="5.6" y="547.6" width="14.8" height="14.8" fill="none" stroke="#f0f0f0" stroke-width="1.25"/>
<path d="M13,555 Q10.4,551.4 12.6,547.6 M13,555 Q16.8,552.4 20.4,554.2 M13,555 Q15.6,558.6 13.6,562.4 M13,555 Q9.2,557.6 5.6,555.6" fill="none" stroke="#f0f0f0" stroke-width="1.05"/>
<path d="M8.4,580 Q11.2,583.6 11.2,585 A2.8,2.8 0 0 1 5.6,585 Q5.6,583.6 8.4,580 Z" fill="#0a96e6"/>
<path d="M8.9,593.9 Q7.2,592.6 8.4,591.2 L13.6,586 L16,588.4 L10.8,593.6 Q9.8,594.6 8.9,593.9 Z" fill="none" stroke="#f0f0f0" stroke-width="1.3"/>
<path d="M12.8,584.6 L17,588.8 L18,587.8 L16.8,586.6 L19.6,583.8 Q21,582 19.8,581.4 Q18.6,580.6 17,582.2 L14.2,585 L13.6,584.4 Z" fill="#f0f0f0"/>
<path d="M8.4,619.8 Q11.2,623.4 11.2,624.2 A2.8,2.8 0 0 1 5.6,624.2 Q5.6,623.4 8.4,619.8 Z" fill="#0a96e6"/>
<path d="M16.8,611.4 L9.4,618.1 L15.5,622.9 L20.8,617.9 L16.5,614.6" fill="none" stroke="#ececec" stroke-width="1.5" stroke-linejoin="round"/>
<path d="M11,618.2 L15.5,622.2 L19.6,618.2 Z" fill="#ececec"/>
<path d="M6,660.8 V655.2 Q9.5,655 11.5,651 Q13.5,647.6 16.5,648 Q18.6,648.4 18.4,651 Q16.8,650.4 16.2,652.2 Q16.4,654.8 20,655.2 V660.8 Z" fill="#e6e6e6"/>
<path d="M11,692.9 V688 Q11,686 13,686 H18 Q20,686 20,688 V692.9 Z" fill="#e6e6e6"/>
<rect x="12.8" y="683.4" width="5.8" height="1.6" fill="#e6e6e6"/>
<rect x="14.6" y="680.3" width="2.6" height="1.6" fill="#e6e6e6"/>
<circle cx="8.8" cy="679.6" r="0.8" fill="#8a8a8a"/>
<circle cx="6.6" cy="682.2" r="0.8" fill="#8a8a8a"/>
<circle cx="8.2" cy="685.6" r="0.9" fill="#8a8a8a"/>
<circle cx="11.2" cy="681.2" r="0.6" fill="#8a8a8a"/>
<circle cx="10.4" cy="684" r="0.5" fill="#8a8a8a"/>
<path d="M16.2,710.9 L19.9,714.9 L15.2,719.3 L11.8,715.2 Z" fill="#e6e6e6"/>
<path d="M11.8,715.2 L15.2,719.3 L11.5,723 L7.8,718.7 Z" fill="#8e8e8e"/>
<rect x="6" y="723" width="3" height="2" fill="#ececec"/>
<rect x="14" y="723" width="6.2" height="2" fill="#ececec"/>
<path d="M6.2,745 Q9.4,744.6 11.2,748 Q13,752.2 15.6,752.4" fill="none" stroke="#ececec" stroke-width="2"/>
<path d="M14.9,747.9 L19.9,752.5 L14.9,756.6 Z" fill="#ececec"/>
<circle cx="12.9" cy="778" r="2.1" fill="none" stroke="#e6e6e6" stroke-width="1.2"/>
<path d="M11.6,780 L8.6,789 M14.2,780 L17.2,789" stroke="#e6e6e6" stroke-width="1.5"/>
<path d="M6.2,784.5 H19.8" stroke="#cfcfcf" stroke-width="0.8"/>
<circle cx="12.9" cy="784.5" r="0.9" fill="#999"/>
<path d="M7.8,811 H15 L17,813 V823 H7.8 Z" fill="none" stroke="#f0f0f0" stroke-width="1.8" stroke-linejoin="miter"/>
<path d="M9,814.3 H12 M9,816.8 H11 M9,818.6 H12 M9,821 H11" stroke="#f0f0f0" stroke-width="0.9"/>
<circle cx="12.4" cy="848.3" r="5.6" fill="none" stroke="#ececec" stroke-width="1.6"/>
<path d="M16.6,852.6 L19.6,855.8" stroke="#ececec" stroke-width="2.4" stroke-linecap="round"/>
<path d="M11.3,874.2 H18 L19.8,876 V884.6 H17" fill="none" stroke="#f0f0f0" stroke-width="1.7"/>
<path d="M6,877.3 H13.2 L15,879.1 V887.8 H6 Z" fill="none" stroke="#f0f0f0" stroke-width="1.8"/><text x="33.76" y="23.80" font-size="18.80" fill="#fff" textLength="201.63" lengthAdjust="spacingAndGlyphs">PARABOLE.svg - Inkscape</text>
<text x="7.86" y="58.00" font-size="18.80" fill="#e6e6e6" textLength="50.41" lengthAdjust="spacingAndGlyphs">Fichier</text>
<text x="72.71" y="58.00" font-size="18.80" fill="#e6e6e6" textLength="56.85" lengthAdjust="spacingAndGlyphs">Édition</text>
<text x="145.10" y="58.00" font-size="18.80" fill="#e6e6e6" textLength="75.75" lengthAdjust="spacingAndGlyphs">Affichage</text>
<text x="235.33" y="58.00" font-size="18.80" fill="#e6e6e6" textLength="54.83" lengthAdjust="spacingAndGlyphs">Calque</text>
<text x="305.35" y="58.00" font-size="18.80" fill="#e6e6e6" textLength="45.04" lengthAdjust="spacingAndGlyphs">Objet</text>
<text x="365.72" y="58.00" font-size="18.80" fill="#e6e6e6" textLength="60.95" lengthAdjust="spacingAndGlyphs">Chemin</text>
<text x="442.67" y="58.00" font-size="18.80" fill="#e6e6e6" textLength="39.58" lengthAdjust="spacingAndGlyphs">Texte</text>
<text x="497.55" y="58.00" font-size="18.80" fill="#e6e6e6" textLength="46.09" lengthAdjust="spacingAndGlyphs">Filtres</text>
<text x="559.43" y="58.00" font-size="18.80" fill="#e6e6e6" textLength="83.80" lengthAdjust="spacingAndGlyphs">Extensions</text>
<text x="659.40" y="58.00" font-size="18.80" fill="#e6e6e6" textLength="35.83" lengthAdjust="spacingAndGlyphs">Aide</text>
<text x="513.46" y="98.00" font-size="19.00" fill="#8c8c8c" textLength="21.69" lengthAdjust="spacingAndGlyphs">X :</text>
<text x="545.39" y="98.00" font-size="19.00" fill="#8e8e8e" textLength="44.48" lengthAdjust="spacingAndGlyphs">0,000</text>
<text x="685.78" y="98.00" font-size="19.00" fill="#8c8c8c" textLength="20.32" lengthAdjust="spacingAndGlyphs">Y :</text>
<text x="716.39" y="98.00" font-size="19.00" fill="#8e8e8e" textLength="44.48" lengthAdjust="spacingAndGlyphs">0,000</text>
<text x="856.40" y="98.00" font-size="19.00" fill="#8c8c8c" textLength="18.75" lengthAdjust="spacingAndGlyphs">L :</text>
<text x="885.39" y="98.00" font-size="19.00" fill="#8e8e8e" textLength="44.48" lengthAdjust="spacingAndGlyphs">0,000</text>
<text x="1065.98" y="98.00" font-size="19.00" fill="#8c8c8c" textLength="24.28" lengthAdjust="spacingAndGlyphs">H :</text>
<text x="1100.39" y="98.00" font-size="19.00" fill="#8e8e8e" textLength="44.48" lengthAdjust="spacingAndGlyphs">0,000</text>
<text x="1252.77" y="98.00" font-size="19.00" fill="#fff" textLength="31.59" lengthAdjust="spacingAndGlyphs">mm</text></svg>
</body></html>
